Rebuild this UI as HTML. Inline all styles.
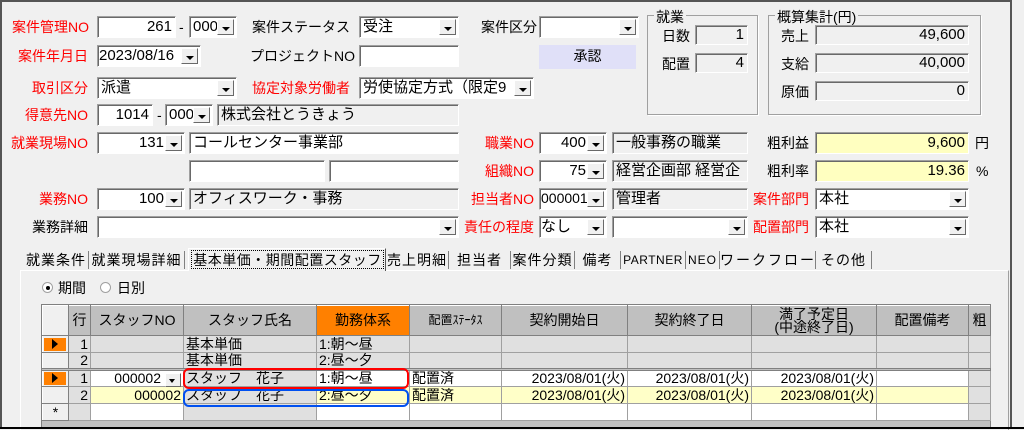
<!DOCTYPE html><html><head><meta charset="utf-8"><style>
*{box-sizing:border-box;margin:0;padding:0}
body{width:1024px;height:429px;background:#f0f0f0;font-family:"Liberation Sans","Noto Sans CJK JP",sans-serif;font-size:14px;color:#000;position:relative;overflow:hidden}
.a{position:absolute;white-space:nowrap;line-height:1}
.l{position:absolute;font-size:14px;text-align:right;white-space:nowrap;line-height:22px}
.r{color:#f00}
.i{position:absolute;background:#fff;border:1px solid;border-color:#a0a0a0 #fff #fff #a0a0a0;box-shadow:inset 1px 1px #696969;font-size:15px;line-height:19px;padding:0 3px;white-space:nowrap;overflow:hidden}
.g{background:#f0f0f0}
.y{background:#ffffc0}
.rt{text-align:right}
.b{position:absolute;top:2px;right:2px;width:17px;bottom:2px;background:#f0f0f0;border:1px solid;border-color:#fff #696969 #696969 #fff}
.b:after{content:"";position:absolute;left:4px;top:7px;border:4px solid transparent;border-top:4px solid #000}
.grp{position:absolute;border:1px solid #a0a0a0;box-shadow:1px 1px #fff}
.grp span{position:absolute;top:-9px;left:6px;background:#f0f0f0;padding:0 2px;font-size:14px}
.tab{position:absolute;top:251px;height:18px;font-size:14px;line-height:18px;border-right:1px solid #808080;text-align:center;white-space:nowrap;letter-spacing:1px}
table{border-collapse:collapse;position:absolute;left:42px;top:305px;table-layout:fixed}
td{border:1px solid #a0a0a0;font-size:14px;height:17px;line-height:15px;white-space:nowrap;overflow:hidden;padding:0 2px}
th{background:#c0c0c0;border:1px solid #808080;border-top-color:#fff;border-left-color:#fff;font-weight:normal;font-size:14px;height:30px;line-height:13px}
.sel{background:#f0f0f0;border:1px solid #808080;border-top-color:#fff;border-left-color:#fff;padding:0 1px}
.gr{background:#e0e0e0}
.w{background:#fff}
.yy{background:#ffffc8}
.ar{display:block;width:22px;height:13px;background:#ff8000;position:relative}
.ar:after{content:"";position:absolute;left:8px;top:1px;border:5.5px solid transparent;border-left:6px solid #000}
</style></head><body>
<div class="a" style="left:0;top:0;width:1012px;height:429px;border:2px solid #555;border-bottom:none"></div>

<div class="l r" style="left:0;width:89px;top:16px">案件管理NO</div>
<div class="i rt" style="left:97px;top:16px;width:79px;height:22px">261</div>
<div class="a" style="left:179px;top:20px">-</div>
<div class="i" style="left:189px;top:16px;width:48px;height:22px">000<div class="b"></div></div>
<div class="l" style="left:250px;width:100px;top:16px">案件ステータス</div>
<div class="i" style="left:359px;top:16px;width:100px;height:22px">受注<div class="b"></div></div>
<div class="l" style="left:470px;width:67px;top:16px">案件区分</div>
<div class="i" style="left:539px;top:16px;width:100px;height:22px"><div class="b"></div></div>

<div class="l r" style="left:0;width:88px;top:45px">案件年月日</div>
<div class="i" style="left:97px;top:45px;width:104px;height:22px;padding:0 1px">2023/08/16<div class="b"></div></div>
<div class="l" style="left:250px;width:100px;top:45px">プロジェクトNO</div>
<div class="i" style="left:359px;top:45px;width:100px;height:22px"></div>
<div class="a" style="left:539px;top:45px;width:97px;height:24px;background:#e0e0f8;text-align:center;line-height:22px;font-size:14px">承認</div>

<div class="l r" style="left:0;width:88px;top:77px">取引区分</div>
<div class="i" style="left:97px;top:77px;width:140px;height:22px">派遣<div class="b"></div></div>
<div class="l r" style="left:250px;width:100px;top:77px">協定対象労働者</div>
<div class="i" style="left:359px;top:77px;width:175px;height:22px">労使協定方式（限定9<div class="b"></div></div>

<div class="l r" style="left:0;width:88px;top:104px">得意先NO</div>
<div class="i rt" style="left:97px;top:104px;width:56px;height:22px">1014</div>
<div class="a" style="left:157px;top:108px">-</div>
<div class="i" style="left:165px;top:104px;width:48px;height:22px">000<div class="b"></div></div>
<div class="i g" style="left:217px;top:104px;width:242px;height:22px">株式会社とうきょう</div>

<div class="l r" style="left:0;width:88px;top:132px">就業現場NO</div>
<div class="i rt" style="left:97px;top:132px;width:88px;height:22px;padding-right:20px">131<div class="b"></div></div>
<div class="i" style="left:189px;top:132px;width:270px;height:22px">コールセンター事業部</div>
<div class="i" style="left:189px;top:160px;width:136px;height:22px"></div>
<div class="i" style="left:329px;top:160px;width:130px;height:22px"></div>
<div class="l r" style="left:0;width:88px;top:188px">業務NO</div>
<div class="i rt" style="left:97px;top:188px;width:88px;height:22px;padding-right:20px">100<div class="b"></div></div>
<div class="i g" style="left:189px;top:188px;width:270px;height:22px">オフィスワーク・事務</div>
<div class="l" style="left:0;width:88px;top:216px">業務詳細</div>
<div class="i" style="left:97px;top:216px;width:362px;height:22px"><div class="b"></div></div>

<div class="l r" style="left:470px;width:64px;top:132px">職業NO</div>
<div class="i rt" style="left:539px;top:132px;width:68px;height:22px;padding-right:20px">400<div class="b"></div></div>
<div class="i g" style="left:612px;top:132px;width:136px;height:22px">一般事務の職業</div>
<div class="l r" style="left:470px;width:64px;top:160px">組織NO</div>
<div class="i rt" style="left:539px;top:160px;width:68px;height:22px;padding-right:20px">75<div class="b"></div></div>
<div class="i g" style="left:612px;top:160px;width:136px;height:22px">経営企画部 経営企</div>
<div class="l r" style="left:470px;width:64px;top:188px">担当者NO</div>
<div class="i" style="left:539px;top:188px;width:68px;height:22px;padding:0 1px;font-size:14px">000001<div class="b"></div></div>
<div class="i g" style="left:612px;top:188px;width:136px;height:22px">管理者</div>
<div class="l r" style="left:460px;width:74px;top:216px">責任の程度</div>
<div class="i" style="left:539px;top:216px;width:68px;height:22px;padding:0 1px">なし<div class="b"></div></div>
<div class="i" style="left:612px;top:216px;width:136px;height:22px"><div class="b"></div></div>

<div class="grp" style="left:647px;top:15px;width:111px;height:100px"><span>就業</span></div>
<div class="l" style="left:660px;width:30px;top:25px">日数</div>
<div class="i g rt" style="left:695px;top:25px;width:53px;height:20px;line-height:17px">1</div>
<div class="l" style="left:660px;width:30px;top:53px">配置</div>
<div class="i g rt" style="left:695px;top:53px;width:53px;height:20px;line-height:17px">4</div>

<div class="grp" style="left:768px;top:15px;width:213px;height:100px"><span>概算集計(円)</span></div>
<div class="l" style="left:775px;width:34px;top:25px">売上</div>
<div class="i g rt" style="left:815px;top:25px;width:154px;height:20px;line-height:17px">49,600</div>
<div class="l" style="left:775px;width:34px;top:53px">支給</div>
<div class="i g rt" style="left:815px;top:53px;width:154px;height:20px;line-height:17px">40,000</div>
<div class="l" style="left:775px;width:34px;top:81px">原価</div>
<div class="i g rt" style="left:815px;top:81px;width:154px;height:20px;line-height:17px">0</div>

<div class="l" style="left:760px;width:49px;top:132px">粗利益</div>
<div class="i y rt" style="left:815px;top:132px;width:154px;height:22px">9,600</div>
<div class="a" style="left:975px;top:136px">円</div>
<div class="l" style="left:760px;width:49px;top:160px">粗利率</div>
<div class="i y rt" style="left:815px;top:160px;width:154px;height:22px">19.36</div>
<div class="a" style="left:976px;top:164px">%</div>
<div class="l r" style="left:750px;width:59px;top:188px">案件部門</div>
<div class="i" style="left:815px;top:188px;width:154px;height:22px">本社<div class="b"></div></div>
<div class="l r" style="left:750px;width:59px;top:216px">配置部門</div>
<div class="i" style="left:815px;top:216px;width:154px;height:22px">本社<div class="b"></div></div>

<div class="a" style="left:20px;top:270px;width:989px;height:160px;border-top:1px solid #fff;border-left:1px solid #fff;border-right:1px solid #a0a0a0"></div>
<div class="tab" style="left:24px;width:65px">就業条件</div>
<div class="tab" style="left:89px;width:96px">就業現場詳細</div>
<div class="a" style="left:188px;top:248px;width:198px;height:23px;background:#f0f0f0;border:1px solid #fff;border-right-color:#555;border-bottom:none"></div>
<div class="tab" style="left:191px;top:250px;width:193px;border:1px dotted #000;height:19px;letter-spacing:0.5px">基本単価・期間配置スタッフ</div>
<div class="tab" style="left:386px;width:63px">売上明細</div>
<div class="tab" style="left:449px;width:62px">担当者</div>
<div class="tab" style="left:511px;width:64px">案件分類</div>
<div class="tab" style="left:575px;width:46px">備考</div>
<div class="tab" style="left:621px;width:65px;font-size:12px;letter-spacing:0.5px">PARTNER</div>
<div class="tab" style="left:686px;width:34px;font-size:12px">NEO</div>
<div class="tab" style="left:720px;width:96px;letter-spacing:2px">ワークフロー</div>
<div class="tab" style="left:816px;width:56px">その他</div>

<div class="a" style="left:42px;top:282px;width:11px;height:11px;border-radius:50%;background:#fff;border:1px solid #a0a0a0"></div>
<div class="a" style="left:46px;top:286px;width:4px;height:4px;border-radius:50%;background:#000"></div>
<div class="a" style="left:58px;top:281px;font-size:14px">期間</div>
<div class="a" style="left:100px;top:282px;width:11px;height:11px;border-radius:50%;background:#fff;border:1px solid #a0a0a0"></div>
<div class="a" style="left:117px;top:281px;font-size:14px">日別</div>

<div class="a" style="left:41px;top:304px;width:950px;height:125px;background:#c0c0c0;border:1px solid #808080"></div>
<table>
<colgroup><col style="width:26px"><col style="width:22px"><col style="width:93px"><col style="width:133px"><col style="width:93px"><col style="width:92px"><col style="width:126px"><col style="width:124px"><col style="width:125px"><col style="width:92px"><col style="width:22px"></colgroup>
<tr><th class="sel"></th><th>行</th><th>スタッフNO</th><th>スタッフ氏名</th><th style="background:#ff8000">勤務体系</th><th style="font-size:12px">配置ｽﾃｰﾀｽ</th><th>契約開始日</th><th>契約終了日</th><th>満了予定日<br>(中途終了日)</th><th>配置備考</th><th>粗</th></tr>
<tr class="gr"><td class="sel"><span class="ar"></span></td><td class="rt">1</td><td></td><td>基本単価</td><td style="border-left:1px solid #000">1:朝～昼</td><td></td><td></td><td></td><td></td><td></td><td></td></tr>
<tr class="gr" style="border-bottom:3px double #808080"><td class="sel"></td><td class="rt">2</td><td></td><td>基本単価</td><td style="border-left:1px solid #000">2:昼～夕</td><td></td><td></td><td></td><td></td><td></td><td></td></tr>
<tr class="w"><td class="sel"><span class="ar"></span></td><td class="rt gr">1</td><td class="rt" style="padding-right:22px;position:relative">000002</td><td class="gr">スタッフ　花子</td><td style="border-left:1px solid #000">1:朝～昼</td><td>配置済</td><td class="rt">2023/08/01(火)</td><td class="rt">2023/08/01(火)</td><td class="rt">2023/08/01(火)</td><td></td><td class="gr"></td></tr>
<tr class="yy"><td class="sel"></td><td class="rt gr">2</td><td class="rt">000002</td><td class="gr">スタッフ　花子</td><td style="border-left:1px solid #000">2:昼～夕</td><td>配置済</td><td class="rt">2023/08/01(火)</td><td class="rt">2023/08/01(火)</td><td class="rt">2023/08/01(火)</td><td></td><td class="gr"></td></tr>
<tr class="w"><td class="sel" style="text-align:center">*</td><td class="gr"></td><td></td><td class="gr"></td><td style="border-left:1px solid #000"></td><td></td><td></td><td></td><td></td><td></td><td class="gr"></td></tr>
</table>
<div class="a" style="left:165px;top:373px;width:16px;height:14px;background:#f0f0f0;border:1px solid;border-color:#fff #696969 #696969 #fff"></div>
<div class="a" style="left:169px;top:379px;border:3.5px solid transparent;border-top:4px solid #000"></div>
<div class="a" style="left:183px;top:368px;width:226px;height:21px;border:2px solid #f00;border-radius:6px"></div>
<div class="a" style="left:183px;top:389px;width:226px;height:18px;border:2px solid #0050f0;border-radius:6px"></div>
<div class="a" style="left:0;top:427px;width:1024px;height:2px;background:#000"></div>
</body></html>
